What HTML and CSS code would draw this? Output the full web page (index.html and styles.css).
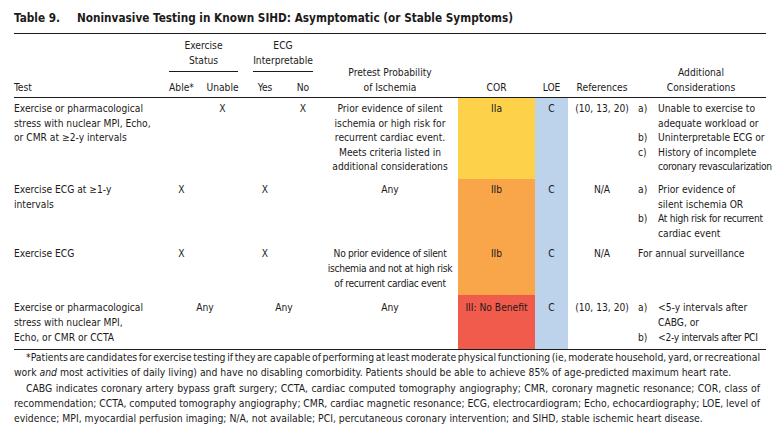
FILE: index.html
```html
<!DOCTYPE html>
<html lang="en">
<head>
<meta charset="utf-8">
<title>Table 9</title>
<link rel="stylesheet" href="styles.css">
</head>
<body>
<div class="page">
  <div class="title"><span class="tnum">Table 9.</span><span class="ttext">Noninvasive Testing in Known SIHD: Asymptomatic (or Stable Symptoms)</span></div>
  <table class="tbl">
    <colgroup>
      <col class="w-test"><col class="w-able"><col class="w-unable"><col class="w-yes"><col class="w-no"><col class="w-pre"><col class="w-cor"><col class="w-loe"><col class="w-ref"><col class="w-add">
    </colgroup>
    <thead>
      <tr class="hr1">
        <th rowspan="2" class="left">Test</th>
        <th colspan="2" class="grp grp-ex"><div class="grp-label">Exercise<br>Status</div></th>
        <th colspan="2" class="grp grp-ecg"><div class="grp-label">ECG<br>Interpretable</div></th>
        <th rowspan="2">Pretest Probability<br>of Ischemia</th>
        <th rowspan="2">COR</th>
        <th rowspan="2">LOE</th>
        <th rowspan="2">References</th>
        <th rowspan="2">Additional<br>Considerations</th>
      </tr>
      <tr class="hr2">
        <th>Able*</th><th>Unable</th><th>Yes</th><th>No</th>
      </tr>
    </thead>
    <tbody>
      <tr>
        <td class="left">Exercise or pharmacological<br>stress with nuclear MPI, Echo,<br>or CMR at ≥2-y intervals</td>
        <td></td><td>X</td><td></td><td>X</td>
        <td>Prior evidence of silent<br>ischemia or high risk for<br>recurrent cardiac event.<br>Meets criteria listed in<br>additional considerations</td>
        <td class="cor cor-iia">IIa</td>
        <td class="loe">C</td>
        <td>(10, 13, 20)</td>
        <td class="add">
          <div class="item"><span class="mk">a)</span><span>Unable to exercise to<br>adequate workload or</span></div>
          <div class="item"><span class="mk">b)</span><span>Uninterpretable ECG or</span></div>
          <div class="item"><span class="mk">c)</span><span>History of incomplete<br><span class="squeeze">coronary revascularization</span></span></div>
        </td>
      </tr>
      <tr class="row-short">
        <td class="left">Exercise ECG at ≥1-y<br>intervals</td>
        <td>X</td><td></td><td>X</td><td></td>
        <td>Any</td>
        <td class="cor cor-iib">IIb</td>
        <td class="loe">C</td>
        <td>N/A</td>
        <td class="add">
          <div class="item"><span class="mk">a)</span><span>Prior evidence of<br>silent ischemia OR</span></div>
          <div class="item"><span class="mk">b)</span><span><span class="squeeze">At high risk for recurrent</span><br>cardiac event</span></div>
        </td>
      </tr>
      <tr>
        <td class="left">Exercise ECG</td>
        <td>X</td><td></td><td>X</td><td></td>
        <td><span class="squeeze">No prior evidence of silent<br>ischemia and not at high risk<br>of recurrent cardiac event</span></td>
        <td class="cor cor-iib">IIb</td>
        <td class="loe">C</td>
        <td>N/A</td>
        <td class="add">For annual surveillance</td>
      </tr>
      <tr class="row-last">
        <td class="left">Exercise or pharmacological<br>stress with nuclear MPI,<br>Echo, or CMR or CCTA</td>
        <td colspan="2">Any</td>
        <td colspan="2">Any</td>
        <td>Any</td>
        <td class="cor cor-iii">III: No Benefit</td>
        <td class="loe">C</td>
        <td>(10, 13, 20)</td>
        <td class="add">
          <div class="item"><span class="mk">a)</span><span>&lt;5-y intervals after<br>CABG, or</span></div>
          <div class="item"><span class="mk">b)</span><span class="squeeze">&lt;2-y intervals after PCI</span></div>
        </td>
      </tr>
    </tbody>
  </table>
  <div class="notes">
    <div class="ln j ind">*Patients are candidates for exercise testing if they are capable of performing at least moderate physical functioning (ie, moderate household, yard, or recreational</div>
    <div class="ln">work <i>and</i> most activities of daily living) and have no disabling comorbidity. Patients should be able to achieve 85% of age-predicted maximum heart rate.</div>
    <div class="ln j ind">CABG indicates coronary artery bypass graft surgery; CCTA, cardiac computed tomography angiography; CMR, coronary magnetic resonance; COR, class of</div>
    <div class="ln j">recommendation; CCTA, computed tomography angiography; CMR, cardiac magnetic resonance; ECG, electrocardiogram; Echo, echocardiography; LOE, level of</div>
    <div class="ln">evidence; MPI, myocardial perfusion imaging; N/A, not available; PCI, percutaneous coronary intervention; and SIHD, stable ischemic heart disease.</div>
  </div>
</div>
</body>
</html>
```

FILE: styles.css
```css
html, body {
  margin: 0;
  padding: 0;
  background: #ffffff;
}
body {
  font-family: "DejaVu Sans Condensed", "Liberation Sans", sans-serif;
  font-stretch: condensed;
  font-size: 10.2px;
  color: #1c1a1a;
}
.page {
  width: 752px;
  padding: 10px 10px 0 14px;
}
.title {
  font-weight: bold;
  font-size: 11.7px;
  line-height: 16px;
  padding-bottom: 7px;
  white-space: nowrap;
}
.tnum {
  display: inline-block;
  width: 63px;
}
.tbl {
  width: 752px;
  table-layout: fixed;
  border-collapse: collapse;
  border-top: 1px solid #1c1a1a;
}
.w-test { width: 150px; }
.w-able { width: 35px; }
.w-unable { width: 47px; }
.w-yes { width: 38px; }
.w-no { width: 38px; }
.w-pre { width: 136px; }
.w-cor { width: 77px; }
.w-loe { width: 33px; }
.w-ref { width: 68px; }
.w-add { width: 130px; }

th {
  font-weight: normal;
  text-align: center;
  vertical-align: bottom;
  line-height: 15px;
  padding: 0 0 2px 0;
  white-space: nowrap;
}
th.left { text-align: left; }
thead { border-bottom: 1px solid #1c1a1a; }
.hr1 th.grp {
  vertical-align: top;
  padding: 4px 0 0 0;
}
.grp-label {
  border-bottom: 1px solid #1c1a1a;
  padding-bottom: 3px;
}
.grp-ex .grp-label { margin: 0 8px 0 5px; }
.grp-ecg .grp-label { margin: 0 9px 0 7px; }
.hr2 th { padding-top: 8px; }

td {
  vertical-align: top;
  text-align: center;
  line-height: 14.6px;
  padding: 4px 0;
  white-space: nowrap;
}
td.left { text-align: left; }
.row-short td { padding-bottom: 2px; }
.row-last td { padding-top: 5px; line-height: 15px; }
tbody { border-bottom: 1px solid #1c1a1a; }
.cor-iia { background: #fed14b; }
.cor-iib { background: #f9a64a; }
.cor-iii { background: #f15b4b; }
.loe { background: #bdd3ec; }
td.add {
  text-align: left;
  padding-left: 2px;
}
.item { display: flex; }
.mk { width: 20px; flex: none; }
.squeeze { letter-spacing: -0.3px; }

.notes {
  padding: 0 6px 0 0;
  font-size: 10.35px;
  line-height: 15.2px;
}
.ln { white-space: nowrap; }
.ln.j {
  white-space: normal;
  word-spacing: -2px;
  text-align: justify;
  text-align-last: justify;
}
.ln.ind { padding-left: 12px; }
```
